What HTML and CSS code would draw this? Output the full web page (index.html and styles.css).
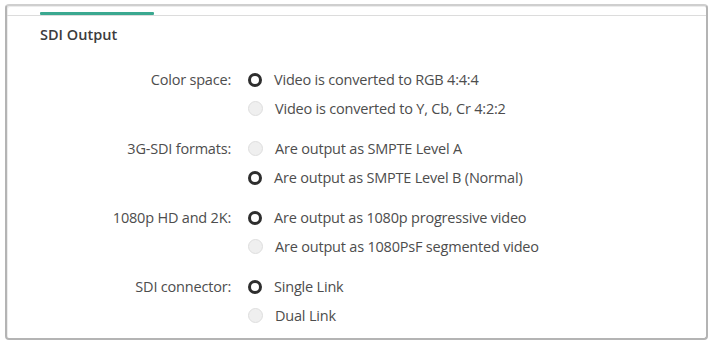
FILE: index.html
```html
<!DOCTYPE html>
<html lang=en>
<head>
	<meta charset="UTF-8">
	<title>SDI Output</title>
	<link rel="stylesheet" href="styles.css">
</head><body>
<div class=Frame>
	<div class=Tabs><div class=TabOn></div></div>
	<div class=Title>SDI Output</div>
	<div class=Settings>
		<div class=Group>
			<div class=Label>Color space:</div>
			<div class=Options>
				<div class=Opt><span class="Radio On"></span>Video is converted to RGB 4:4:4</div>
				<div class=Opt><span class=Radio></span>Video is converted to Y, Cb, Cr 4:2:2</div>
			</div>
		</div>
		<div class=Group>
			<div class=Label>3G-SDI formats:</div>
			<div class=Options>
				<div class=Opt><span class=Radio></span>Are output as SMPTE Level A</div>
				<div class=Opt><span class="Radio On"></span>Are output as SMPTE Level B (Normal)</div>
			</div>
		</div>
		<div class=Group>
			<div class=Label>1080p HD and 2K:</div>
			<div class=Options>
				<div class=Opt><span class="Radio On"></span>Are output as 1080p progressive video</div>
				<div class=Opt><span class=Radio></span>Are output as 1080PsF segmented video</div>
			</div>
		</div>
		<div class=Group>
			<div class=Label>SDI connector:</div>
			<div class=Options>
				<div class=Opt><span class="Radio On"></span>Single Link</div>
				<div class=Opt><span class=Radio></span>Dual Link</div>
			</div>
		</div>
	</div>
</div>
</body></html>
```

FILE: styles.css
```css
body { margin:0; background:#fff; font-family:"Open Sans", sans-serif; color:#4d4d4d; }
.Frame { margin:4px 4px 2px 5px; height:336px; box-sizing:border-box; border:2px solid #b4b4b4; border-top-color:#cfcfcf; border-radius:4px; box-shadow:inset 1px 1px 0 #ececec; }
.Tabs { padding:7px 0 0 33px; box-sizing:border-box; height:10px; border-bottom:1px solid #dcdcdc; }
.TabOn { width:114px; height:3px; margin-top:-1px; background:#3aa890; border-radius:1px; }
.Title { margin:10px 0 0 33px; font-size:14.5px; font-weight:600; color:#3c3c3c; line-height:18px; }
.Settings { margin-top:21px; display:flex; flex-direction:column; gap:11px; }
.Group { display:flex; }
.Label { width:224px; text-align:right; font-size:14.5px; line-height:29px; height:29px; letter-spacing:-0.2px; }
.Options { margin-left:17px; display:flex; flex-direction:column; }
.Opt { display:flex; align-items:center; height:29px; font-size:14.5px; letter-spacing:-0.2px; }
.Radio { width:13px; height:13px; border-radius:50%; border:1px solid #dedede; background:#efefef; margin-right:12px; }
.Radio.On { border:3.5px solid #2e2e2e; background:#fff; width:8px; height:8px; }
```
